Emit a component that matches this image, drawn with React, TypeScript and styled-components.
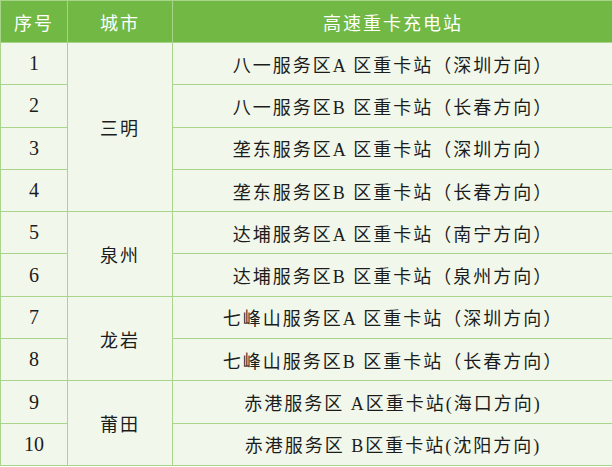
import { ReactElement } from 'react';
import styled, { createGlobalStyle } from 'styled-components';

interface StationRow {
  no: number;
  station: string;
  city?: string;
  span?: number;
}

const rows: StationRow[] = [
  { no: 1, city: '三明', span: 4, station: '八一服务区A 区重卡站（深圳方向）' },
  { no: 2, station: '八一服务区B 区重卡站（长春方向）' },
  { no: 3, station: '垄东服务区A 区重卡站（深圳方向）' },
  { no: 4, station: '垄东服务区B 区重卡站（长春方向）' },
  { no: 5, city: '泉州', span: 2, station: '达埔服务区A 区重卡站（南宁方向）' },
  { no: 6, station: '达埔服务区B 区重卡站（泉州方向）' },
  { no: 7, city: '龙岩', span: 2, station: '七峰山服务区A 区重卡站（深圳方向）' },
  { no: 8, station: '七峰山服务区B 区重卡站（长春方向）' },
  { no: 9, city: '莆田', span: 2, station: '赤港服务区 A区重卡站(海口方向)' },
  { no: 10, station: '赤港服务区 B区重卡站(沈阳方向)' },
];

const GlobalStyle = createGlobalStyle`
  html, body {
    margin: 0;
    padding: 0;
    background: #ffffff;
  }
  body {
    font-family: "Liberation Serif", "Noto Sans CJK SC", serif;
  }
`;

const Page = styled.div`
  width: 612px;
  height: 467px;
`;

const Table = styled.table`
  width: 611px;
  height: 466px;
  border-collapse: collapse;
  table-layout: fixed;
  background: #f1f8eb;
  font-size: 18px;
  letter-spacing: 2px;
`;

const HeadCell = styled.th<{ $width: number }>`
  width: ${(p) => p.$width}px;
  height: 41px;
  padding: 0;
  background: #71b944;
  color: #ffffff;
  font-weight: normal;
  text-align: center;
  border: 1px solid #a9d48c;
`;

const Cell = styled.td`
  padding: 0;
  text-align: center;
  vertical-align: middle;
  color: #1c1c1c;
  border: 1px solid #a9d48c;
`;

const NumCell = styled(Cell)`
  font-size: 20px;
  letter-spacing: 0;
`;

const App = (): ReactElement => {
  return (
    <Page>
      <GlobalStyle />
      <Table>
        <thead>
          <tr>
            <HeadCell $width={66}>序号</HeadCell>
            <HeadCell $width={104}>城市</HeadCell>
            <HeadCell $width={440}>高速重卡充电站</HeadCell>
          </tr>
        </thead>
        <tbody>
          {rows.map((r) => (
            <tr key={r.no}>
              <NumCell>{r.no}</NumCell>
              {r.city ? <Cell rowSpan={r.span}>{r.city}</Cell> : null}
              <Cell>{r.station}</Cell>
            </tr>
          ))}
        </tbody>
      </Table>
    </Page>
  );
};

export default App;
